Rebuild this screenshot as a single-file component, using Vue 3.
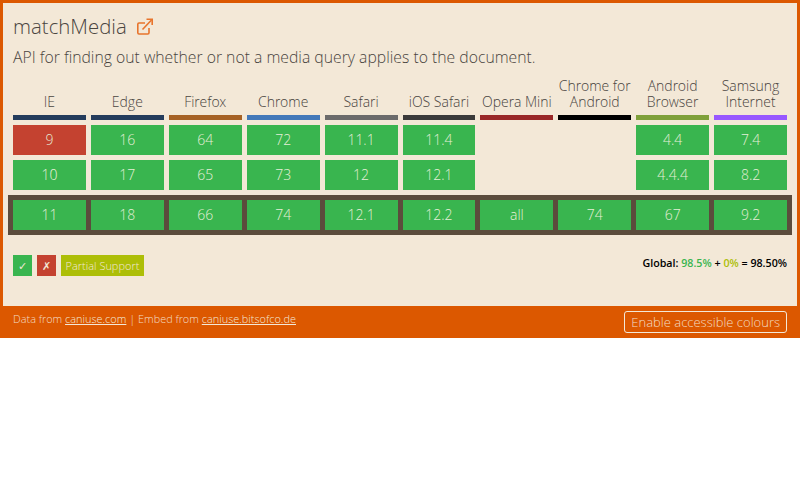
<script setup>
import { ref } from 'vue'

const browsers = ref([
  { name: 'IE', color: '#243c5c', past: ['9', '10'], current: '11' },
  { name: 'Edge', color: '#243c5c', past: ['16', '17'], current: '18' },
  { name: 'Firefox', color: '#a66225', past: ['64', '65'], current: '66' },
  { name: 'Chrome', color: '#4479b9', past: ['72', '73'], current: '74' },
  { name: 'Safari', color: '#6b6b6b', past: ['11.1', '12'], current: '12.1' },
  { name: 'iOS Safari', color: '#3a3a3a', past: ['11.4', '12.1'], current: '12.2' },
  { name: 'Opera Mini', color: '#992828', past: ['', ''], current: 'all' },
  { name: 'Chrome for Android', color: '#000000', past: ['', ''], current: '74' },
  { name: 'Android Browser', color: '#7fa03a', past: ['4.4', '4.4.4'], current: '67' },
  { name: 'Samsung Internet', color: '#9858ff', past: ['7.4', '8.2'], current: '9.2' }
])

const cellClass = (version) => {
  if (!version) return 'cell empty'
  return version === '9' ? 'cell no' : 'cell yes'
}
</script>

<template>
  <div class="embed">
    <main class="content">
      <h1 class="title">
        matchMedia
        <a class="ext" href="#">
          <svg width="16" height="17" viewBox="0 0 16 17" fill="none" stroke="#e8742c" stroke-width="1.600">
            <path d="M8 5H2a1.200 1.200 0 0 0-1.200 1.200v8.600A1.200 1.200 0 0 0 2 16h8.800a1.200 1.200 0 0 0 1.200-1.200V10" />
            <path d="M5.500 11.500 14.500 2" />
            <path d="M9.500 1.300h5.700v5.700" />
          </svg>
        </a>
      </h1>
      <p class="desc">API for finding out whether or not a media query applies to the document.</p>

      <div class="row heads">
        <div v-for="b in browsers" :key="b.name" class="head">
          <span class="name">{{ b.name }}</span>
          <span class="bar" :style="{ background: b.color }"></span>
        </div>
      </div>

      <div v-for="i in [0, 1]" :key="i" class="row past">
        <div v-for="b in browsers" :key="b.name" :class="cellClass(b.past[i])">{{ b.past[i] }}</div>
      </div>

      <div class="row current">
        <div v-for="b in browsers" :key="b.name" class="cell yes">{{ b.current }}</div>
      </div>

      <div class="legend">
        <div class="keys">
          <span class="key yes">✓</span>
          <span class="key no">✗</span>
          <span class="key partial">Partial Support</span>
        </div>
        <div class="global">
          Global: <span class="g-yes">98.5%</span> + <span class="g-partial">0%</span> = 98.50%
        </div>
      </div>
    </main>

    <footer class="foot">
      <span>Data from <a href="#">caniuse.com</a> | Embed from <a href="#">caniuse.bitsofco.de</a></span>
      <button class="access">Enable accessible colours</button>
    </footer>
  </div>
</template>

<style scoped>
.embed {
  height: 338px;
  box-sizing: border-box;
  display: flex;
  flex-direction: column;
  background: #f3e8d7;
  border: solid #dc5800;
  border-width: 3px 3px 0;
  font-family: "Open Sans Light", "Open Sans", "Liberation Sans", sans-serif;
  font-weight: 300;
  color: #4a453f;
}
.content {
  flex: 1;
  padding: 9px 10px 0;
}
.title {
  margin: 0;
  height: 29px;
  display: flex;
  align-items: center;
  font-size: 20.4px;
  font-weight: 300;
  line-height: 29px;
}
.ext {
  display: flex;
  margin-left: 10px;
}
.desc {
  margin: 5px 0 0;
  font-size: 15.75px;
  line-height: 22px;
}
.row {
  display: grid;
  grid-template-columns: repeat(10, 1fr);
  gap: 5px;
}
.heads {
  margin-top: 7px;
  height: 45px;
}
.head {
  display: flex;
  flex-direction: column;
  justify-content: flex-end;
  text-align: center;
}
.name {
  font-size: 14px;
  line-height: 16px;
  padding-bottom: 5px;
}
.bar {
  height: 5px;
}
.past {
  margin-top: 5px;
}
.cell {
  height: 30px;
  line-height: 30px;
  text-align: center;
  font-size: 14px;
  color: #e6efd8;
}
.yes {
  background: #39b54f;
}
.no {
  background: #c44230;
}
.empty {
  background: transparent;
}
.current {
  margin: 5px -5px 0;
  padding: 5px;
  background: #5b4c3c;
}
.legend {
  margin-top: 20px;
  display: flex;
  justify-content: space-between;
  align-items: flex-start;
}
.keys {
  display: flex;
  gap: 5px;
}
.key {
  height: 21px;
  line-height: 21px;
  min-width: 19px;
  text-align: center;
  font-size: 11px;
  color: #f3e8d7;
}
.key.partial {
  padding: 0 4.500px;
  background: #adbe07;
}
.global {
  font-family: "Open Sans", sans-serif;
  font-size: 10.700px;
  font-weight: 600;
  color: #000;
  line-height: 16px;
}
.g-yes {
  color: #39b54f;
}
.g-partial {
  color: #adbe07;
}
.foot {
  height: 32px;
  margin: 0 -3px;
  padding: 0 13px;
  display: flex;
  justify-content: space-between;
  align-items: center;
  background: #dc5800;
  color: #f3dcc4;
  font-size: 10.950px;
}
.foot > span {
  position: relative;
  top: -4px;
}
.foot a {
  color: #f3e8d7;
}
.access {
  height: 22px;
  padding: 0 6px;
  border: 1px solid #f3e8d7;
  border-radius: 3px;
  background: transparent;
  color: #f3dcc4;
  font-family: inherit;
  font-weight: 300;
  font-size: 13px;
}
</style>
